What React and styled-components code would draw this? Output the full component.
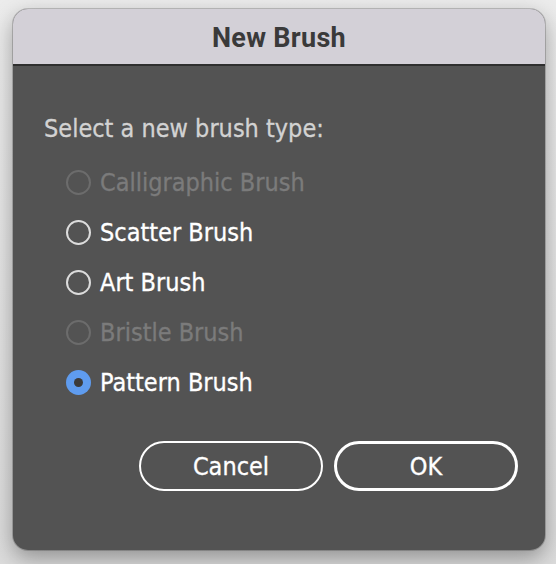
import React, { useState } from 'react'
import styled, { createGlobalStyle } from 'styled-components'

const GlobalStyle = createGlobalStyle`
  html, body {
    margin: 0;
    padding: 0;
    background: #e4e4e4;
  }
`

const Page = styled.div`
  width: 556px;
  height: 564px;
  padding: 9px 0 0 13px;
  box-sizing: border-box;
  background: linear-gradient(#ececec, #dcdcdc);
`

const Dialog = styled.div`
  width: 532px;
  height: 541px;
  border-radius: 15px;
  overflow: hidden;
  background: #535353;
  display: flex;
  flex-direction: column;
  box-shadow: 0 0 0 1px rgba(0, 0, 0, 0.18), 0 8px 22px rgba(0, 0, 0, 0.35);
`

const TitleBar = styled.div`
  height: 57px;
  flex-shrink: 0;
  background: #d3d0d7;
  border-bottom: 2px solid #2f2f2f;
  box-sizing: border-box;
  display: flex;
  align-items: center;
  justify-content: center;
  font-family: Roboto, "Liberation Sans", sans-serif;
  font-weight: 700;
  font-size: 27px;
  letter-spacing: 0.3px;
  color: #3a3a3a;
  padding-top: 2px;
`

const Body = styled.div`
  flex: 1;
  display: flex;
  flex-direction: column;
  padding: 49px 27px 0 31px;
  font-family: "DejaVu Sans Condensed", "DejaVu Sans", sans-serif;
  font-stretch: semi-condensed;
  -webkit-text-stroke: 0.3px currentColor;
`

const Prompt = styled.div`
  font-size: 25px;
  color: #d2d2d2;
  line-height: 28px;
  margin-bottom: 14px;
`

const Options = styled.div`
  display: flex;
  flex-direction: column;
  padding-left: 22px;
`

const Option = styled.label`
  height: 50px;
  display: flex;
  align-items: center;
  gap: 9px;
  font-size: 25px;
  color: ${p => (p.$disabled ? '#7b7b7b' : '#ffffff')};
  cursor: ${p => (p.$disabled ? 'default' : 'pointer')};
`

const Radio = styled.span`
  width: 25px;
  height: 25px;
  box-sizing: border-box;
  border-radius: 50%;
  flex-shrink: 0;
  display: flex;
  align-items: center;
  justify-content: center;
  border: ${p => (p.$checked ? 'none' : `2px solid ${p.$disabled ? '#6c6c6c' : '#dcdcdc'}`)};
  background: ${p => (p.$checked ? '#5f9cef' : 'transparent')};

  &::after {
    content: '';
    display: ${p => (p.$checked ? 'block' : 'none')};
    width: 9px;
    height: 9px;
    border-radius: 50%;
    background: #3b3b3b;
  }
`

const Buttons = styled.div`
  display: flex;
  justify-content: flex-end;
  gap: 11px;
  margin-top: 34px;
`

const Button = styled.button`
  width: 184px;
  height: 50px;
  box-sizing: border-box;
  border-radius: 25px;
  background: transparent;
  border: ${p => (p.$primary ? '3px' : '2px')} solid #ffffff;
  color: #ffffff;
  font-family: inherit;
  font-stretch: inherit;
  font-size: 25px;
  padding: 0;
  cursor: pointer;
`

const brushes = [
  { name: 'Calligraphic Brush', disabled: true },
  { name: 'Scatter Brush' },
  { name: 'Art Brush' },
  { name: 'Bristle Brush', disabled: true },
  { name: 'Pattern Brush' },
]

export default function App () {
  const [selected, setSelected] = useState('Pattern Brush')

  return (
    <Page>
      <GlobalStyle />
      <Dialog>
        <TitleBar>New Brush</TitleBar>
        <Body>
          <Prompt>Select a new brush type:</Prompt>
          <Options>
            {brushes.map(b => (
              <Option
                key={b.name}
                $disabled={b.disabled}
                onClick={() => !b.disabled && setSelected(b.name)}
              >
                <Radio $checked={selected === b.name} $disabled={b.disabled} />
                {b.name}
              </Option>
            ))}
          </Options>
          <Buttons>
            <Button>Cancel</Button>
            <Button $primary>OK</Button>
          </Buttons>
        </Body>
      </Dialog>
    </Page>
  )
}
